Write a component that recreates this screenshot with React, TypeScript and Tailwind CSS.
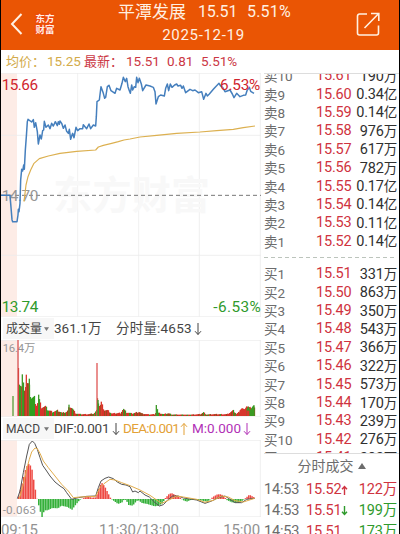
import { clsx } from 'clsx';

type Quote = [label: string, price: string, volume: string];

const ASKS: Quote[] = [
  ['卖10', '15.61', '190万'],
  ['卖9', '15.60', '0.34亿'],
  ['卖8', '15.59', '0.14亿'],
  ['卖7', '15.58', '976万'],
  ['卖6', '15.57', '617万'],
  ['卖5', '15.56', '782万'],
  ['卖4', '15.55', '0.17亿'],
  ['卖3', '15.54', '0.14亿'],
  ['卖2', '15.53', '0.11亿'],
  ['卖1', '15.52', '0.14亿'],
];

const BIDS: Quote[] = [
  ['买1', '15.51', '331万'],
  ['买2', '15.50', '863万'],
  ['买3', '15.49', '350万'],
  ['买4', '15.48', '543万'],
  ['买5', '15.47', '366万'],
  ['买6', '15.46', '322万'],
  ['买7', '15.45', '573万'],
  ['买8', '15.44', '170万'],
  ['买9', '15.43', '239万'],
  ['买10', '15.42', '276万'],
  ['买11', '15.41', '282万'],
];

const TRADES = [
  { time: '14:53', price: '15.52', dir: 'up', volume: '122万', buy: true },
  { time: '14:53', price: '15.51', dir: 'down', volume: '199万', buy: false },
  { time: '14:53', price: '15.51', dir: '', volume: '173万', buy: false },
];

// chart units: 3 per css pixel
const PRICE =
  '3,376 30,376 32,400 36,449 38,455 51,455 54,435 55,418 57,425 60,400 62,330 65,298 68,303 71,285 73,298 76,240 79,200 82,155 84,148 95,156 100,149 103,172 107,158 112,185 115,222 120,195 124,207 128,182 131,180 133,154 138,172 145,165 150,176 155,160 160,168 166,155 172,167 175,155 178,163 180,153 185,160 190,175 195,165 200,184 205,190 208,178 212,208 216,195 218,190 222,203 228,172 233,182 240,176 248,176 250,164 260,176 267,162 272,176 280,165 287,168 289,140 291,95 298,90 303,50 310,70 314,85 317,82 322,50 327,46 333,62 345,70 350,55 360,60 366,40 370,22 376,35 380,25 384,50 388,62 391,70 395,45 398,60 403,50 407,52 410,22 414,38 418,25 424,42 428,62 438,45 450,48 460,52 465,65 468,102 475,80 482,75 493,78 497,55 502,42 506,62 511,42 516,52 524,45 530,42 534,48 542,46 546,55 550,48 557,68 570,58 578,62 585,60 595,68 605,65 611,88 618,70 622,78 628,72 640,58 647,50 657,40 662,48 668,52 675,65 690,60 697,72 702,83 710,70 720,80 730,76 737,75 741,62 748,52 752,64 762,70';
const AVG =
  '72,395 75,370 78,345 84,320 92,300 102,280 118,266 145,258 180,250 230,244 287,240 295,231 310,226 335,220 355,215 372,210 390,207 420,201 470,196 530,190 600,186 650,182 700,178 730,173 765,168';

const DIF =
  '52,248 60,225 70,170 80,120 88,85 97,75 104,82 112,100 120,125 128,148 140,165 150,180 165,198 180,210 192,218 200,230 215,250 235,245 260,241 287,240 295,215 303,195 315,187 326,183 340,188 352,198 365,205 378,207 390,212 398,228 405,225 415,230 420,225 435,237 448,243 465,260 478,270 490,266 505,250 518,240 535,240 550,246 570,249 590,252 615,262 635,255 655,245 675,240 690,250 705,260 725,260 740,250 764,247';
const DEA =
  '58,248 70,205 80,160 88,130 95,108 105,96 112,98 120,112 130,135 145,155 165,180 185,205 205,225 220,245 240,243 287,241 300,215 312,203 330,190 345,192 365,200 390,209 420,222 450,238 470,252 485,262 505,253 530,240 550,243 590,250 615,259 640,253 665,240 685,243 705,254 730,258 764,247';

// x, height
const VOLUME_ENVELOPE = [
  [53, 228], [56, 120], [62, 95], [70, 95], [78, 110], [86, 92], [92, 62], [102, 58], [108, 38], [116, 55], [122, 30],
  [135, 30], [142, 20], [155, 14], [172, 18], [186, 10], [200, 14], [207, 34], [216, 24], [226, 8], [240, 6], [262, 6],
  [280, 8], [288, 18], [292, 60], [296, 35], [304, 38], [312, 20], [322, 18], [334, 8], [360, 10], [368, 24], [378, 12],
  [395, 8], [416, 14], [424, 8], [445, 5], [464, 6], [469, 30], [474, 10], [490, 6], [503, 9], [515, 5], [560, 4],
  [600, 6], [609, 12], [618, 5], [638, 6], [655, 6], [680, 6], [698, 18], [708, 7], [718, 15], [732, 18], [744, 25],
  [752, 22], [758, 30], [762, 26],
];
const VOLUME_SPIKES: [number, number, string][] = [
  [39, 60, '#5a9e3c'],
  [54, 228, '#d8504e'],
  [67, 125, '#3f9a2a'],
  [79, 124, '#dc3b2e'],
  [88, 112, '#3f9a2a'],
  [116, 64, '#3f9a2a'],
  [207, 34, '#3f9a2a'],
  [291, 159, '#e05a58'],
  [294, 48, '#3f9a2a'],
  [304, 43, '#dc3b2e'],
  [469, 33, '#3f9a2a'],
];

const lerp = (points: number[][], x: number) => {
  const i = points.findIndex(p => p[0] >= x);
  if (i <= 0) return points[i === 0 ? 0 : points.length - 1][1];
  const [x0, y0] = points[i - 1];
  const [x1, y1] = points[i];
  return y0 + ((y1 - y0) * (x - x0)) / (x1 - x0);
};

const volumeColor = (x: number, i: number) => {
  if (x > 86 && x < 104) return '#2f9e1e';
  const n = (i * 7 + ((i * i) % 11)) % 10;
  if (n < 5) return '#d6322a';
  return n < 8 ? '#9a4a1e' : '#3a9a22';
};

const VOLUME_BARS = Array.from({ length: 237 }, (_, i) => {
  const x = 54 + i * 3;
  const noise = 0.75 + (((i * 37) % 17) / 17) * 0.35;
  return { x, h: Math.max(4, lerp(VOLUME_ENVELOPE, x) * noise), color: volumeColor(x, i) };
});

// positive heights rise above the zero line
const MACD_ENVELOPE = [
  [52, 0], [60, 32], [68, 62], [76, 95], [86, 108], [94, 88], [102, 40], [108, 4], [111, -6], [117, -32], [124, -54],
  [131, -34], [140, -34], [155, -27], [172, -28], [182, -20], [200, -24], [214, -32], [226, -16], [238, -2], [250, 3],
  [260, 9], [272, 4], [286, 5], [294, 30], [302, 50], [312, 38], [324, 14], [330, 2], [336, -3], [352, -15], [364, -10],
  [370, -2], [376, -3], [384, -18], [396, -20], [406, -8], [412, -3], [424, -12], [440, -15], [462, -22], [474, -20],
  [486, -12], [494, 3], [504, 14], [512, 18], [528, 10], [540, 3], [546, -3], [558, -8], [572, -2], [600, -4], [620, -8],
  [628, -2], [636, 6], [650, 14], [662, 14], [672, 6], [678, -3], [694, -10], [716, -12], [726, -4], [736, 4], [746, 13],
  [760, 5],
];
const MACD_BARS = Array.from({ length: 142 }, (_, i) => {
  const x = 54 + i * 5;
  return { x, h: lerp(MACD_ENVELOPE, x) };
});

const CHART_FONT = 'Roboto, "Noto Sans CJK SC", sans-serif';

function Frame({ top, height, middle = [] }: { top: number; height: number; middle?: number[] }) {
  return (
    <g stroke="#ededed" strokeWidth="2.5">
      <rect x="3" y={top} width="48" height={height} fill="#fdece6" stroke="none" />
      {[233, 416, 598].map(x => (
        <line key={x} x1={x} x2={x} y1={top} y2={top + height} />
      ))}
      {[top + 1, ...middle, top + height - 1].map(y => (
        <line key={y} x1="3" x2="783" y1={y} y2={y} />
      ))}
      <line x1="781" x2="781" y1={top} y2={top + height} />
    </g>
  );
}

function PriceChart() {
  return (
    <svg viewBox="3 9 780 732" className="block h-[244px] w-[260px]" fontFamily={CHART_FONT} fontSize="46">
      <Frame top={9} height={732} middle={[196, 556]} />
      <text x="160" y="417" fontSize="117" fontWeight="700" fill="#f8f8f8" textLength="470">东方财富</text>
      <line x1="3" x2="783" y1="376" y2="376" stroke="#777" strokeWidth="3" strokeDasharray="12 9" />
      <text x="5" y="392" fill="#969696" textLength="110" fontSize="46">14.70</text>
      <polyline points={AVG} fill="none" stroke="#dcb050" strokeWidth="3.5" strokeLinejoin="round" />
      <polyline points={PRICE} fill="none" stroke="#457fbd" strokeWidth="4.5" strokeLinejoin="round" />
      <text x="5" y="61" fill="#d0252e" textLength="109">15.66</text>
      <text x="660" y="61" fill="#d0252e" textLength="121">6.53%</text>
      <text x="5" y="726" fill="#2f9a2c" textLength="110">13.74</text>
      <text x="640" y="726" fill="#2f9a2c" textLength="142">-6.53%</text>
    </svg>
  );
}

function VolumeChart() {
  return (
    <svg viewBox="3 72 780 231" className="block h-[77px] w-[260px]" fontFamily={CHART_FONT}>
      <Frame top={72} height={231} />
      <text x="8" y="109" fill="#969696" fontSize="34" textLength="98">16.4万</text>
      {VOLUME_BARS.map(b => (
        <rect key={b.x} x={b.x} y={300 - b.h} width="3.4" height={b.h} fill={b.color} />
      ))}
      {VOLUME_SPIKES.map(([x, h, color]) => (
        <rect key={x} x={x - 2} y={300 - h} width="4" height={h} fill={color} />
      ))}
      {/* closing run-up */}
      <path d="M718 300V284l8-8 8 4 6-10 6 4 6-2 2 28Z" fill="#d8352c" />
      <path d="M740 300v-22l6-8 4 12 6-8 4-6 4 0v32Z" fill="#3a9a22" />
      <path d="M740 300v-16h8v16Z" fill="#d8352c" />
    </svg>
  );
}

function MacdChart() {
  return (
    <svg viewBox="3 72 780 231" className="block h-[77px] w-[260px]" fontFamily={CHART_FONT}>
      <Frame top={72} height={231} />
      {MACD_BARS.map(({ x, h }) => (
        <rect
          key={x}
          x={x}
          y={h > 0 ? 249 - h : 249}
          width="4.4"
          height={Math.abs(h)}
          fill={h > 0 ? '#ee4a44' : '#35b03a'}
        />
      ))}
      <polyline points={DIF} fill="none" stroke="#555" strokeWidth="3" strokeLinejoin="round" />
      <polyline points={DEA} fill="none" stroke="#e2ad4c" strokeWidth="3" strokeLinejoin="round" />
      <text x="8" y="293" fill="#969696" fontSize="35" textLength="100">-0.063</text>
    </svg>
  );
}

function Arrow({ down, className }: { down?: boolean; className?: string }) {
  return (
    <svg viewBox="0 0 8 14" className={clsx('h-[14px] w-2 shrink-0', down && 'rotate-180', className)} fill="none" stroke="currentColor">
      <path d="M4 13V1.5M1 4.8 4 1.5l3 3.3" />
    </svg>
  );
}

function Caret({ up, className }: { up?: boolean; className?: string }) {
  return (
    <svg viewBox="0 0 8 6" className={clsx('shrink-0', className)} fill="currentColor">
      <path d={up ? 'M4 0 8 6H0Z' : 'M0 0h8L4 6Z'} />
    </svg>
  );
}

function QuoteRow({ quote: [label, price, volume] }: { quote: Quote }) {
  return (
    <li className="flex h-[18.42px] shrink-0 items-center text-[14.5px] leading-[18px] whitespace-nowrap">
      <span className="w-[52px] text-[13.5px] text-[#6c6c6c]">{label}</span>
      <span className="w-[36px] tracking-[-0.2px] text-[#cf3340]">{price}</span>
      <span className="flex-1 text-right tracking-[-0.2px] text-[#303030]">
        {volume.slice(0, -1)}
        <span className="text-[13.5px]">{volume.slice(-1)}</span>
      </span>
    </li>
  );
}

export default function App() {
  return (
    <div className="flex h-[534px] w-[400px] flex-col overflow-hidden border-x border-black bg-white font-[Roboto,'Noto_Sans_CJK_SC',sans-serif]">
      {/* Header */}
      <header className="flex h-[50px] shrink-0 items-center bg-[#ea5504] pb-[2px] text-[#fff0e2]">
        <svg viewBox="0 0 12 22" className="ml-[9px] h-[22px] w-[13px] shrink-0" fill="none" stroke="currentColor" strokeWidth="2">
          <path d="M11 1 1.5 11 11 21" />
        </svg>
        <div className="ml-[11px] w-[22px] text-center font-['Noto_Sans_CJK_SC',sans-serif] text-[9.5px] leading-[11px] font-bold [text-shadow:0_0_2px_#f5281e]">
          <p>东方</p>
          <p>财富</p>
        </div>
        <div className="ml-[62px] flex w-[176px] flex-col items-center">
          <h1 className="flex h-[24px] w-full items-center text-[16px] leading-none whitespace-nowrap">
            <span className="w-[80px] text-[17px]">平潭发展</span>
            <span className="w-[49px] tracking-[-0.2px]">15.51</span>
            <span className="tracking-[0.2px]">5.51%</span>
          </h1>
          <p className="h-[24px] pr-[5px] text-[15px] leading-[22px] tracking-[0.7px]">2025-12-19</p>
        </div>
        <svg viewBox="0 0 24 24" className="ml-auto mr-[19px] h-[24px] w-[24px] shrink-0" fill="none" stroke="currentColor" strokeWidth="1.6">
          <path d="M11 2H3.5A2 2 0 0 0 1.500 4v17a2 2 0 0 0 2 2h17a2 2 0 0 0 2-2v-7.500" />
          <path d="M8.500 16 22.500 1.800M15 1.500h7.800V9" />
        </svg>
      </header>

      <div className="flex h-[23px] shrink-0 items-center pl-[5px] text-[13.500px] leading-none whitespace-nowrap text-[#cb3744]">
        <span className="w-[41px] text-[13px] text-[#d3ab4a]">均价：</span>
        <span className="w-[37px] text-[#d3ab4a]">15.25</span>
        <span className="w-[42px] text-[13px]">最新：</span>
        <span className="w-[41px]">15.51</span>
        <span className="w-[34px]">0.81</span>
        <span>5.51%</span>
      </div>

      <main className="flex min-h-0 flex-1">
        {/* Charts */}
        <section className="w-[261px] shrink-0">
          <PriceChart />
          <div className="flex h-[23px] items-center pl-[2px] text-[14px] leading-none whitespace-nowrap text-[#444]">
            <div className="flex h-[21px] w-[51px] items-center bg-[#f7f7f7] pl-[3px] text-[12px]">
              <span className="w-[35px]">成交量</span>
              <Caret className="ml-[3px] h-[4px] w-[5px] text-[#777]" />
            </div>
            <span className="w-[62px] text-[13.500px]">361.1万</span>
            <span className="text-[13.500px] tracking-[0.2px]">分时量:4653</span>
            <Arrow down className="ml-[2px]" />
          </div>
          <VolumeChart />
          <div className="flex h-[23px] items-center pl-[2px] text-[13.500px] leading-none whitespace-nowrap text-[#444]">
            <div className="flex h-[21px] w-[51px] items-center bg-[#f7f7f7] pl-[3px]">
              <span className="w-[35px] text-[12px]">MACD</span>
              <Caret className="ml-[3px] h-[4px] w-[5px] text-[#777]" />
            </div>
            <span className="w-[57px] tracking-[-0.2px]">DIF:0.001</span>
            <Arrow down className="mr-[3px] ml-[1px]" />
            <span className="w-[57px] tracking-[-0.7px] text-[#e3a137]">DEA:0.001</span>
            <Arrow className="mr-[4px] text-[#e3a137]" />
            <span className="w-[51px] text-[#b130b6]">M:0.000</span>
            <Arrow down className="text-[#b130b6]" />
          </div>
          <MacdChart />
          <div className="flex h-[17px] justify-between pr-[2px] text-[15px] leading-[26px] tracking-[-0.1px] text-[#929292]">
            <span>09:15</span>
            <span className="pl-[17px]">11:30/13:00</span>
            <span>15:00</span>
          </div>
        </section>

        {/* Order book */}
        <section className="flex flex-1 flex-col pl-[2px]">
          <ul className="flex h-[178px] shrink-0 flex-col justify-end overflow-hidden border-t border-[#ddd] pr-[2px]">
            {ASKS.map(q => (
              <QuoteRow key={q[0]} quote={q} />
            ))}
          </ul>
          <svg viewBox="0 0 134 14" className="h-[14px] w-[134px] shrink-0">
            <path d="M0 6.500H132" stroke="#bcc4bc" strokeDasharray="4 3" />
          </svg>
          <ul className="h-[189px] shrink-0 overflow-hidden border-b border-[#ddd] pr-[2px]">
            {BIDS.map(q => (
              <QuoteRow key={q[0]} quote={q} />
            ))}
          </ul>
          <h2 className="flex h-[24px] shrink-0 items-center justify-center gap-[4px] text-[14px] leading-none text-[#6c6c6c]">
            分时成交
            <Caret up className="h-[6px] w-[8px]" />
          </h2>
          <ul className="min-h-0 flex-1 overflow-hidden pt-px pr-[2px]">
            {TRADES.map((t, i) => (
              <li key={i} className="flex h-[21px] items-center text-[14.500px] leading-[20px] whitespace-nowrap">
                <span className="w-[42px] tracking-[-0.2px] text-[#6c6c6c]">{t.time}</span>
                <span className="w-[35px] tracking-[-0.2px] text-[#cf3340]">{t.price}</span>
                {t.dir && (
                  <svg
                    viewBox="0 0 7 10"
                    className={clsx('h-[10px] w-[7px]', t.dir === 'up' ? 'text-[#cf3340]' : 'rotate-180 text-[#2f9a2c]')}
                    fill="none"
                    stroke="currentColor"
                    strokeWidth="1.4"
                  >
                    <path d="M3.500 10V1.500M1 4.200l2.500-2.700L6 4.200" />
                  </svg>
                )}
                <span className={clsx('flex-1 text-right tracking-[-0.2px]', t.buy ? 'text-[#cf3340]' : 'text-[#2f9a2c]')}>
                  {t.volume}
                </span>
              </li>
            ))}
          </ul>
        </section>
      </main>
    </div>
  );
}
